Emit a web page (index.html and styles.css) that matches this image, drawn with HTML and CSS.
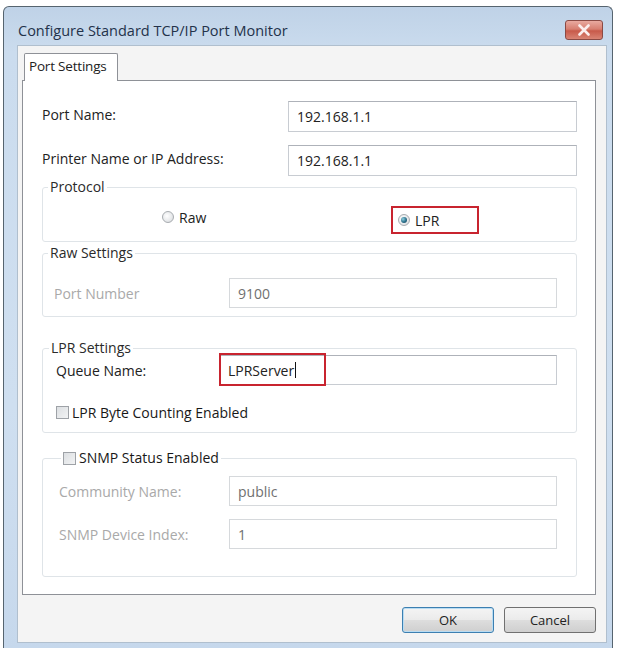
FILE: index.html
```html
<!DOCTYPE html>
<html>
<head>
<meta charset="utf-8">
<link rel="stylesheet" href="styles.css">
</head>
<body>
<div class="window">
  <div class="titlebar">
    <span class="title">Configure Standard TCP/IP Port Monitor</span>
    <span class="close">
      <svg width="14" height="12" viewBox="0 0 14 12"><path d="M2.5 1.5 L11.5 10.5 M11.5 1.5 L2.5 10.5" stroke="#fbeeee" stroke-width="2.6" stroke-linecap="round"/></svg>
    </span>
  </div>
  <div class="client">
    <div class="tabs"><div class="tab">Port Settings</div></div>
    <div class="panel">
      <div class="row first"><span class="lbl">Port Name:</span><div class="input">192.168.1.1</div></div>
      <div class="row"><span class="lbl">Printer Name or IP Address:</span><div class="input">192.168.1.1</div></div>

      <fieldset class="group protocol">
        <legend>Protocol</legend>
        <div class="radios">
          <span class="radio-item raw"><span class="radio"></span>Raw</span>
          <span class="radio-item lpr"><span class="radio checked"></span>LPR</span>
        </div>
      </fieldset>

      <fieldset class="group rawset">
        <legend>Raw Settings</legend>
        <div class="grow"><span class="lbl dis">Port Number</span><div class="input disabled">9100</div></div>
      </fieldset>

      <fieldset class="group lprset">
        <legend>LPR Settings</legend>
        <div class="grow queue"><span class="lbl">Queue Name:</span>
          <div class="input queue-input">LPRServer<span class="caret"></span><span class="mark"></span></div>
        </div>
        <div class="check-row"><span class="check"></span>LPR Byte Counting Enabled</div>
      </fieldset>

      <fieldset class="group snmp">
        <legend><span class="check"></span>SNMP Status Enabled</legend>
        <div class="grow"><span class="lbl dis">Community Name:</span><div class="input disabled">public</div></div>
        <div class="grow"><span class="lbl dis">SNMP Device Index:</span><div class="input disabled">1</div></div>
      </fieldset>
    </div>
    <div class="buttons">
      <button class="btn default">OK</button>
      <button class="btn">Cancel</button>
    </div>
  </div>
</div>
</body>
</html>
```
FILE: styles.css
```css
* { box-sizing: border-box; }
html, body { margin: 0; padding: 0; background: #fff; }
body {
  font-family: "Open Sans", "Noto Sans", sans-serif;
  font-size: 14px;
  color: #222;
}
.window {
  margin: 6px 4px 0 3px;
  width: 610px;
  border: 1px solid #56646f;
  border-bottom: none;
  border-radius: 6px 6px 0 0;
  background: linear-gradient(180deg, #bfd2e7 0px, #cbdcee 45px, #cfdff0 400px, #c6d8ec 100%);
  padding: 0 5px 6px 13px;
}
.titlebar {
  height: 38px;
  padding-top: 8px;
  display: flex;
  align-items: center;
  justify-content: space-between;
}
.title {
  font-size: 14.5px;
  color: #23324a;
  padding-left: 1px;
}
.close {
  width: 38px;
  height: 20px;
  margin-right: 4px;
  border: 1px solid #8a4a44;
  border-radius: 3px;
  background: linear-gradient(180deg, #e9aaa0 0%, #d77f71 45%, #c85a4a 55%, #d98474 100%);
  display: flex;
  align-items: center;
  justify-content: center;
}
.client {
  background: #f4f4f4;
  padding: 7px 10px 9px 4px;
  border: 1px solid #b0bfce;
}
.tabs { display: flex; padding-left: 2px; }
.tab {
  position: relative;
  z-index: 1;
  height: 28px;
  width: 94px;
  margin-bottom: -1px;
  background: #fff;
  border: 1px solid #8e9197;
  border-bottom: none;
  border-radius: 2px 2px 0 0;
  padding: 3px 0 0 4px;
  font-size: 13.5px;
  letter-spacing: -0.2px;
}
.panel {
  background: #fff;
  border: 1px solid #8e9197;
  height: 515px;
  padding: 20px 18px 0 19px;
  display: flex;
  flex-direction: column;
}
.row {
  display: grid;
  grid-template-columns: 246px 1fr;
  align-items: center;
  height: 31px;
}
.row + .row { margin-top: 13px; }
.row .lbl { margin-top: -4px; }
.input {
  height: 30px;
  border: 1px solid #c8ccd2;
  border-top-color: #aeb2b9;
  background: #fff;
  display: flex;
  align-items: center;
  padding-left: 8px;
  font-size: 14px;
  color: #222;
}
.row .input { height: 31px; }
.input.disabled { border-color: #d6d9dc; color: #707070; }
.group {
  margin: 0;
  min-width: 0;
  border: 1px solid #dfe4e8;
  border-radius: 3px;
}
.group legend {
  padding: 0 2px;
  line-height: 18px;
  font-size: 14px;
  color: #2a2a2a;
}
.protocol { margin-top: 2px; padding: 10px 10px 7px 10px; }
.protocol legend { margin-left: -5px; }
.radios { display: flex; align-items: center; padding-left: 109px; }
.radio-item { display: flex; align-items: center; gap: 5px; }
.radio-item.raw { width: 229px; margin-top: -6px; }
.radio-item.lpr {
  width: 88px;
  height: 28px;
  border: 2px solid #c8242f;
  padding-left: 5px;
}
.radio {
  width: 12px;
  height: 12px;
  border-radius: 50%;
  border: 1px solid #a8acb0;
  background: radial-gradient(circle at 40% 40%, #ffffff 0%, #e6e8ea 60%, #cfd3d7 100%);
  display: inline-flex;
  align-items: center;
  justify-content: center;
}
.radio.checked::after {
  content: "";
  width: 6px;
  height: 6px;
  border-radius: 50%;
  background: radial-gradient(circle at 35% 35%, #8fd0e0 0%, #2a6f8a 55%, #173f55 100%);
}
.rawset { margin-top: 2px; padding: 16px 19px 8px 11px; }
.rawset legend { margin-left: -6px; }
.grow {
  display: grid;
  grid-template-columns: 175px 1fr;
  align-items: center;
  height: 30px;
}
.lbl.dis { color: #a9a9a9; }
.lprset { margin-top: 22px; padding: 0 19px 10px 13px; }
.lprset legend { margin-left: -7px; }
.queue { grid-template-columns: 163px 1fr; margin-top: -2px; }
.queue-input { position: relative; }
.caret {
  display: inline-block;
  width: 1px;
  height: 16px;
  background: #111;
  margin-left: 1px;
}
.mark {
  position: absolute;
  left: -1px;
  top: -3px;
  width: 107px;
  height: 33px;
  border: 2px solid #c8242f;
}
.check-row {
  display: flex;
  align-items: center;
  gap: 3px;
  margin-top: 18px;
  color: #181818;
}
.check {
  display: inline-block;
  width: 13px;
  height: 13px;
  border: 1px solid #9ea2a7;
  background: linear-gradient(135deg, #dcdfe2 0%, #f2f3f4 100%);
}
.snmp { margin-top: 16px; padding: 9px 19px 27px 16px; }
.snmp legend { display: flex; align-items: center; gap: 3px; margin-left: 2px; color: #181818; }
.snmp .grow { grid-template-columns: 170px 1fr; }
.snmp .grow + .grow { margin-top: 13px; }
.buttons {
  display: flex;
  justify-content: flex-end;
  gap: 10px;
  margin-top: 12px;
}
.btn {
  width: 92px;
  height: 26px;
  font-family: inherit;
  font-size: 13px;
  color: #222;
  border: 1px solid #707070;
  border-radius: 3px;
  background: linear-gradient(180deg, #f4f4f4 0%, #ebebeb 48%, #dddddd 52%, #cfcfcf 100%);
  padding: 0;
}
.btn.default {
  border-color: #3c7fb1;
  box-shadow: inset 0 0 0 1px #b9dcf2;
}
```
